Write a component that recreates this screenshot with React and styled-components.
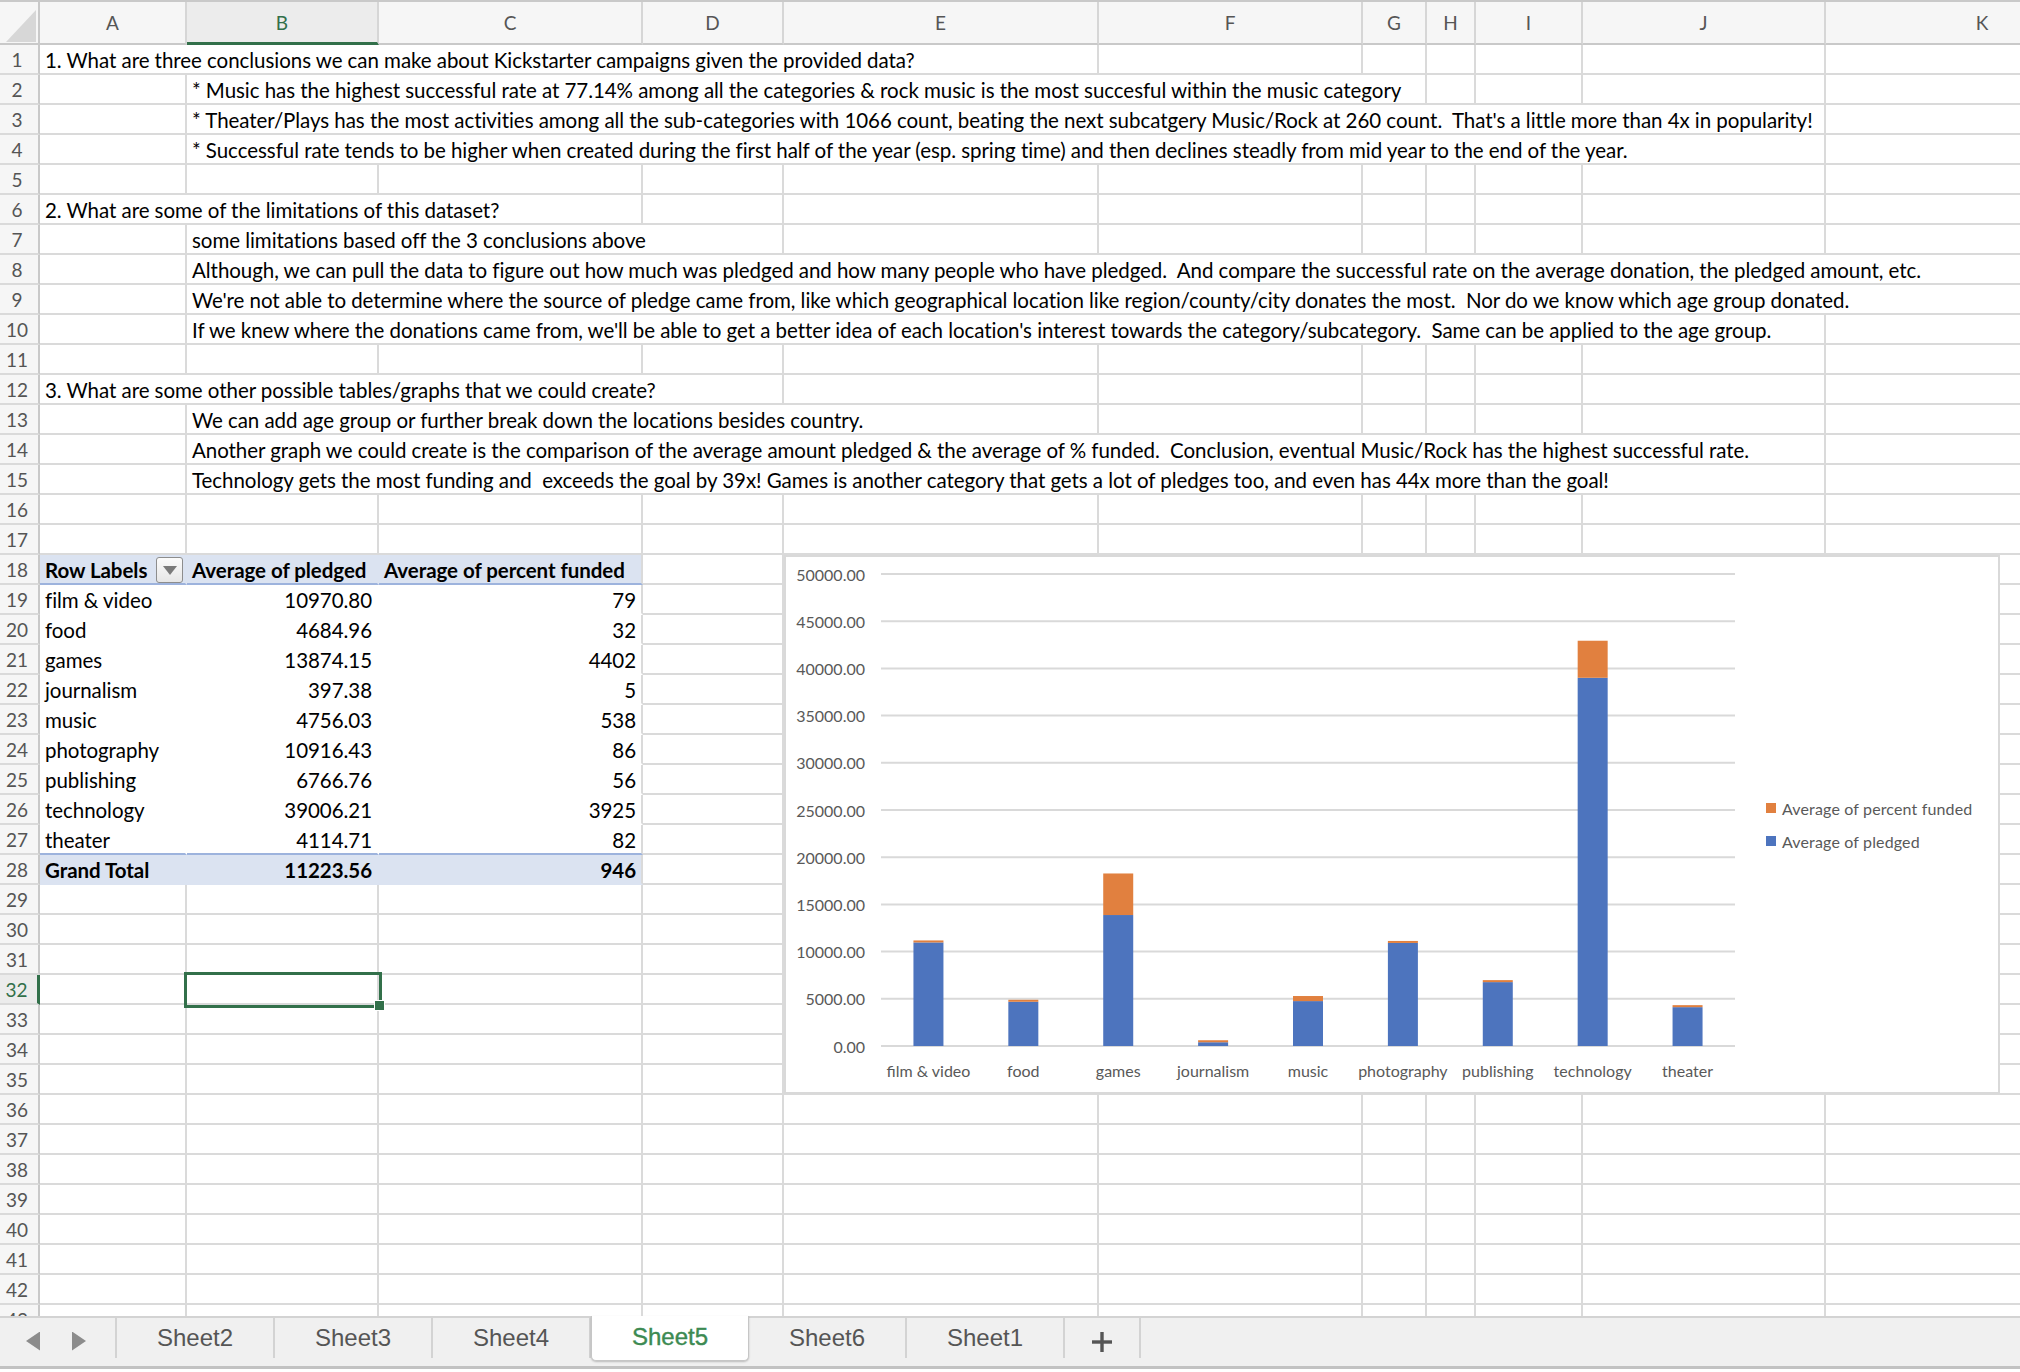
import React from "react";
import styled, { createGlobalStyle, css } from "styled-components";

const COLS = [147, 192, 264, 141, 315, 264, 64, 49, 107, 243, 314];
const LETTERS = ["A", "B", "C", "D", "E", "F", "G", "H", "I", "J", "K"];
const TEMPLATE = `40px ${COLS.map((w) => w + "px").join(" ")}`;
const GRID = "#dadada";
const HEAD_LINE = "#c9c9c9";
const GREEN = "#32704a";
const PIVOT_BG = "#dbe3f1";
const PIVOT_LINE = "#9db3dd";
const SEL_COL = 1;
const SEL_ROW = 32;

const TEXT_ROWS = {
  1: { col: 0, span: 5, text: "1. What are three conclusions we can make about Kickstarter campaigns given the provided data?" },
  2: { col: 1, span: 6, text: "* Music has the highest successful rate at 77.14% among all the categories & rock music is the most succesful within the music category" },
  3: { col: 1, span: 9, text: "* Theater/Plays has the most activities among all the sub-categories with 1066 count, beating the next subcatgery Music/Rock at 260 count.  That's a little more than 4x in popularity!" },
  4: { col: 1, span: 9, text: "* Successful rate tends to be higher when created during the first half of the year (esp. spring time) and then declines steadly from mid year to the end of the year." },
  6: { col: 0, span: 3, text: "2. What are some of the limitations of this dataset?" },
  7: { col: 1, span: 3, text: "some limitations based off the 3 conclusions above" },
  8: { col: 1, span: 10, text: "Although, we can pull the data to figure out how much was pledged and how many people who have pledged.  And compare the successful rate on the average donation, the pledged amount, etc." },
  9: { col: 1, span: 10, text: "We're not able to determine where the source of pledge came from, like which geographical location like region/county/city donates the most.  Nor do we know which age group donated." },
  10: { col: 1, span: 9, text: "If we knew where the donations came from, we'll be able to get a better idea of each location's interest towards the category/subcategory.  Same can be applied to the age group." },
  12: { col: 0, span: 4, text: "3. What are some other possible tables/graphs that we could create?" },
  13: { col: 1, span: 4, text: "We can add age group or further break down the locations besides country." },
  14: { col: 1, span: 9, text: "Another graph we could create is the comparison of the average amount pledged & the average of % funded.  Conclusion, eventual Music/Rock has the highest successful rate." },
  15: { col: 1, span: 9, text: "Technology gets the most funding and  exceeds the goal by 39x! Games is another category that gets a lot of pledges too, and even has 44x more than the goal!" },
};

const PIVOT = [
  ["film & video", 10970.8, 79],
  ["food", 4684.96, 32],
  ["games", 13874.15, 4402],
  ["journalism", 397.38, 5],
  ["music", 4756.03, 538],
  ["photography", 10916.43, 86],
  ["publishing", 6766.76, 56],
  ["technology", 39006.21, 3925],
  ["theater", 4114.71, 82],
];

const SHEETS = ["Sheet2", "Sheet3", "Sheet4", "Sheet5", "Sheet6", "Sheet1"];
const ACTIVE_SHEET = "Sheet5";

const GlobalStyle = createGlobalStyle`
  html, body { margin: 0; padding: 0; background: #fff; overflow: hidden; }
  body { font-family: Lato, "Open Sans", sans-serif; }
  #root { width: 2020px; height: 1372px; }
`;

const Window = styled.div`
  width: 2020px;
  height: 1372px;
  display: flex;
  flex-direction: column;
  overflow: hidden;
  background: #fff;
`;

const Sheet = styled.div`
  position: relative;
  flex: 1;
  overflow: hidden;
`;

const HeaderRow = styled.div`
  display: grid;
  grid-template-columns: ${TEMPLATE};
  width: 2140px;
  height: 45px;
  box-sizing: border-box;
  border-top: 2px solid ${HEAD_LINE};
`;

const ColHead = styled.div`
  box-sizing: border-box;
  background: ${(p) => (p.$sel ? "#ececec" : "#f6f6f6")};
  border-right: 2px solid #d6d6d6;
  border-bottom: ${(p) => (p.$sel ? `3px solid ${GREEN}` : `2px solid ${HEAD_LINE}`)};
  display: flex;
  align-items: center;
  justify-content: center;
  font-size: 19px;
  color: ${(p) => (p.$sel ? GREEN : "#555")};
`;

const Corner = styled.div`
  box-sizing: border-box;
  background: #f6f6f6;
  border-right: 2px solid ${HEAD_LINE};
  border-bottom: 2px solid ${HEAD_LINE};
  position: relative;
  &::after {
    content: "";
    position: absolute;
    left: 6px;
    top: 8px;
    width: 30px;
    height: 32px;
    background: #d7d7d7;
    clip-path: polygon(100% 0, 100% 100%, 0 100%);
  }
`;

const Row = styled.div`
  display: grid;
  grid-template-columns: ${TEMPLATE};
  width: 2140px;
  height: 30px;
`;

const RowNum = styled.div`
  box-sizing: border-box;
  background: ${(p) => (p.$sel ? "#ececec" : "#f6f6f6")};
  border-right: ${(p) => (p.$sel ? `3px solid ${GREEN}` : `2px solid ${HEAD_LINE}`)};
  border-bottom: 2px solid ${GRID};
  display: flex;
  align-items: center;
  justify-content: center;
  padding-right: 4px;
  font-size: 19px;
  color: ${(p) => (p.$sel ? GREEN : "#555")};
`;

const Cell = styled.div`
  grid-column: span ${(p) => p.$span || 1};
  box-sizing: border-box;
  min-width: 0;
  height: 30px;
  border-right: 2px solid ${(p) => p.$rb || GRID};
  border-bottom: 2px solid ${(p) => p.$bb || GRID};
  background: ${(p) => p.$bg || "transparent"};
  display: flex;
  align-items: center;
  justify-content: ${(p) => (p.$align === "right" ? "flex-end" : "flex-start")};
  padding: ${(p) => (p.$align === "right" ? "1px 5px 0 0" : "1px 0 0 5px")};
  font-size: 20.5px;
  letter-spacing: -0.05px;
  font-weight: ${(p) => (p.$bold ? 700 : 400)};
  color: #000;
  white-space: pre;
  position: relative;
  ${(p) =>
    p.$selected &&
    css`
      outline: 3px solid ${GREEN};
      outline-offset: 0;
      z-index: 2;
      &::after {
        content: "";
        position: absolute;
        right: -8px;
        bottom: -8px;
        width: 9px;
        height: 9px;
        background: ${GREEN};
        border: 1px solid #fff;
      }
    `}
`;

const FilterButton = styled.div`
  margin-left: auto;
  margin-right: 2px;
  width: 27px;
  height: 26px;
  box-sizing: border-box;
  border: 1.5px solid #8d8d8d;
  border-radius: 3px;
  background: linear-gradient(#fbfbfb, #e6e6e6);
  display: flex;
  align-items: center;
  justify-content: center;
  &::before {
    content: "";
    border-left: 7px solid transparent;
    border-right: 7px solid transparent;
    border-top: 9px solid #7a7a7a;
    margin-top: 2px;
  }
`;

const ChartBox = styled.div`
  position: absolute;
  left: 784px;
  top: 555px;
  width: 1216px;
  height: 539px;
  box-sizing: border-box;
  border: 2px solid #d9d9d9;
  background: #fff;
  display: flex;
  align-items: center;
  z-index: 3;
`;

const PlotSvg = styled.svg`
  flex: none;
  display: block;
  text {
    font-family: Lato, "Open Sans", sans-serif;
    font-size: 16px;
    fill: #595959;
  }
`;

const Legend = styled.div`
  display: flex;
  flex-direction: column;
  gap: 8px;
`;

const LegendItem = styled.div`
  display: flex;
  align-items: center;
  gap: 6px;
  height: 25px;
  font-size: 16px;
  letter-spacing: 0.15px;
  color: #595959;
  &::before {
    content: "";
    width: 10px;
    height: 10px;
    background: ${(p) => p.$color};
  }
`;

const TabBar = styled.div`
  flex: none;
  height: 53px;
  margin-bottom: 3px;
  box-sizing: border-box;
  border-top: 2px solid #d3d3d3;
  border-bottom: 3px solid #c2c2c2;
  background: #f0f0f0;
  display: flex;
  align-items: flex-start;
  font-family: "Liberation Sans", Arial, sans-serif;
`;

const Nav = styled.div`
  width: 117px;
  height: 40px;
  box-sizing: border-box;
  border-right: 2px solid #d3d3d3;
  display: flex;
  align-items: center;
  padding: 6px 0 0 26px;
  gap: 32px;
`;

const Arrow = styled.div`
  width: 14px;
  height: 19px;
  background: #8c8c8c;
  clip-path: ${(p) =>
    p.$dir === "left" ? "polygon(100% 0, 100% 100%, 0 50%)" : "polygon(0 0, 0 100%, 100% 50%)"};
`;

const Tab = styled.div`
  width: 158px;
  height: 40px;
  box-sizing: border-box;
  border-right: 2px solid #d3d3d3;
  display: flex;
  align-items: center;
  justify-content: center;
  font-size: 24px;
  color: #555;
  ${(p) =>
    p.$active &&
    css`
      margin-top: -2px;
      height: 45px;
      padding-bottom: 3px;
      background: #fff;
      color: #3c8a52;
      border: 1px solid #c6c6c6;
      border-top: none;
      border-radius: 0 0 5px 5px;
      box-shadow: 0 1px 2px rgba(0, 0, 0, 0.22);
      -webkit-text-stroke: 0.4px #3c8a52;
    `}
`;

const AddTab = styled.div`
  width: 76px;
  height: 40px;
  box-sizing: border-box;
  border-right: 2px solid #d3d3d3;
  display: flex;
  align-items: center;
  justify-content: center;
  padding-top: 8px;
`;

const PLOT_W = 980;
const PLOT_H = 535;
const X0 = 95;
const X1 = 949;
const BASE = 489;
const SCALE = 472 / 50000;
const yOf = (v) => BASE - v * SCALE;
const AXIS = [50000, 45000, 40000, 35000, 30000, 25000, 20000, 15000, 10000, 5000, 0];
const BLUE = "#4d74be";
const ORANGE = "#e1803f";

function Chart() {
  const step = (X1 - X0) / PIVOT.length;
  return (
    <ChartBox>
      <PlotSvg width={PLOT_W} height={PLOT_H} viewBox={`0 0 ${PLOT_W} ${PLOT_H}`}>
        {AXIS.map((v) => (
          <g key={v}>
            <line x1={X0} x2={X1} y1={yOf(v)} y2={yOf(v)} stroke="#d9d9d9" strokeWidth="2" />
            <text x={79} y={yOf(v)} textAnchor="end" dominantBaseline="central">
              {v.toFixed(2)}
            </text>
          </g>
        ))}
        {PIVOT.map(([name, pledged, pct], i) => {
          const cx = X0 + step * (i + 0.5);
          const hb = Math.max(pledged * SCALE, 2);
          const ho = Math.max(pct * SCALE, 2);
          return (
            <g key={name}>
              <rect x={cx - 15} y={BASE - hb} width={30} height={hb} fill={BLUE} />
              <rect x={cx - 15} y={BASE - hb - ho} width={30} height={ho} fill={ORANGE} />
              <text x={cx} y={513} textAnchor="middle" dominantBaseline="central">
                {name}
              </text>
            </g>
          );
        })}
      </PlotSvg>
      <Legend>
        <LegendItem $color={ORANGE}>Average of percent funded</LegendItem>
        <LegendItem $color={BLUE}>Average of pledged</LegendItem>
      </Legend>
    </ChartBox>
  );
}

function pivotRow(r) {
  const first = 18;
  const last = 28;
  if (r < first || r > last) return null;
  const cells = [];
  if (r === first) {
    cells.push(
      <Cell key="a" $bold $bg={PIVOT_BG} $rb="transparent" $bb={PIVOT_LINE} style={{ paddingRight: 0 }}>
        Row Labels
        <FilterButton />
      </Cell>,
      <Cell key="b" $bold $bg={PIVOT_BG} $rb="transparent" $bb={PIVOT_LINE}>Average of pledged</Cell>,
      <Cell key="c" $bold $bg={PIVOT_BG} $bb={PIVOT_LINE}>Average of percent funded</Cell>
    );
  } else if (r === last) {
    cells.push(
      <Cell key="a" $bold $bg={PIVOT_BG} $rb="transparent" $bb="transparent">Grand Total</Cell>,
      <Cell key="b" $bold $bg={PIVOT_BG} $rb="transparent" $bb="transparent" $align="right">11223.56</Cell>,
      <Cell key="c" $bold $bg={PIVOT_BG} $bb="transparent" $align="right">946</Cell>
    );
  } else {
    const [name, pledged, pct] = PIVOT[r - first - 1];
    const bb = r === last - 1 ? PIVOT_LINE : "transparent";
    cells.push(
      <Cell key="a" $bg="#fff" $rb="transparent" $bb={bb}>{name}</Cell>,
      <Cell key="b" $bg="#fff" $rb="transparent" $bb={bb} $align="right">{pledged.toFixed(2)}</Cell>,
      <Cell key="c" $bg="#fff" $bb={bb} $align="right">{String(pct)}</Cell>
    );
  }
  for (let c = 3; c < COLS.length; c++) cells.push(<Cell key={c} />);
  return cells;
}

function rowCells(r) {
  const pv = pivotRow(r);
  if (pv) return pv;
  const t = TEXT_ROWS[r];
  const cells = [];
  let c = 0;
  while (c < COLS.length) {
    if (t && c === t.col) {
      cells.push(
        <Cell key={c} $span={t.span}>
          {t.text}
        </Cell>
      );
      c += t.span;
    } else {
      cells.push(<Cell key={c} $selected={r === SEL_ROW && c === SEL_COL} />);
      c += 1;
    }
  }
  return cells;
}

export default function App() {
  const rows = Array.from({ length: 43 }, (_, i) => i + 1);
  return (
    <Window>
      <GlobalStyle />
      <Sheet>
        <HeaderRow>
          <Corner />
          {LETTERS.map((l, i) => (
            <ColHead key={l} $sel={i === SEL_COL}>
              {l}
            </ColHead>
          ))}
        </HeaderRow>
        {rows.map((r) => (
          <Row key={r}>
            <RowNum $sel={r === SEL_ROW}>{r}</RowNum>
            {rowCells(r)}
          </Row>
        ))}
        <Chart />
      </Sheet>
      <TabBar>
        <Nav>
          <Arrow $dir="left" />
          <Arrow $dir="right" />
        </Nav>
        {SHEETS.map((s) => (
          <Tab key={s} $active={s === ACTIVE_SHEET}>
            {s}
          </Tab>
        ))}
        <AddTab>
          <svg width="22" height="22" viewBox="0 0 22 22">
            <rect x="9.3" y="1" width="3.4" height="20" fill="#555" />
            <rect x="1" y="9.3" width="20" height="3.4" fill="#555" />
          </svg>
        </AddTab>
      </TabBar>
    </Window>
  );
}
